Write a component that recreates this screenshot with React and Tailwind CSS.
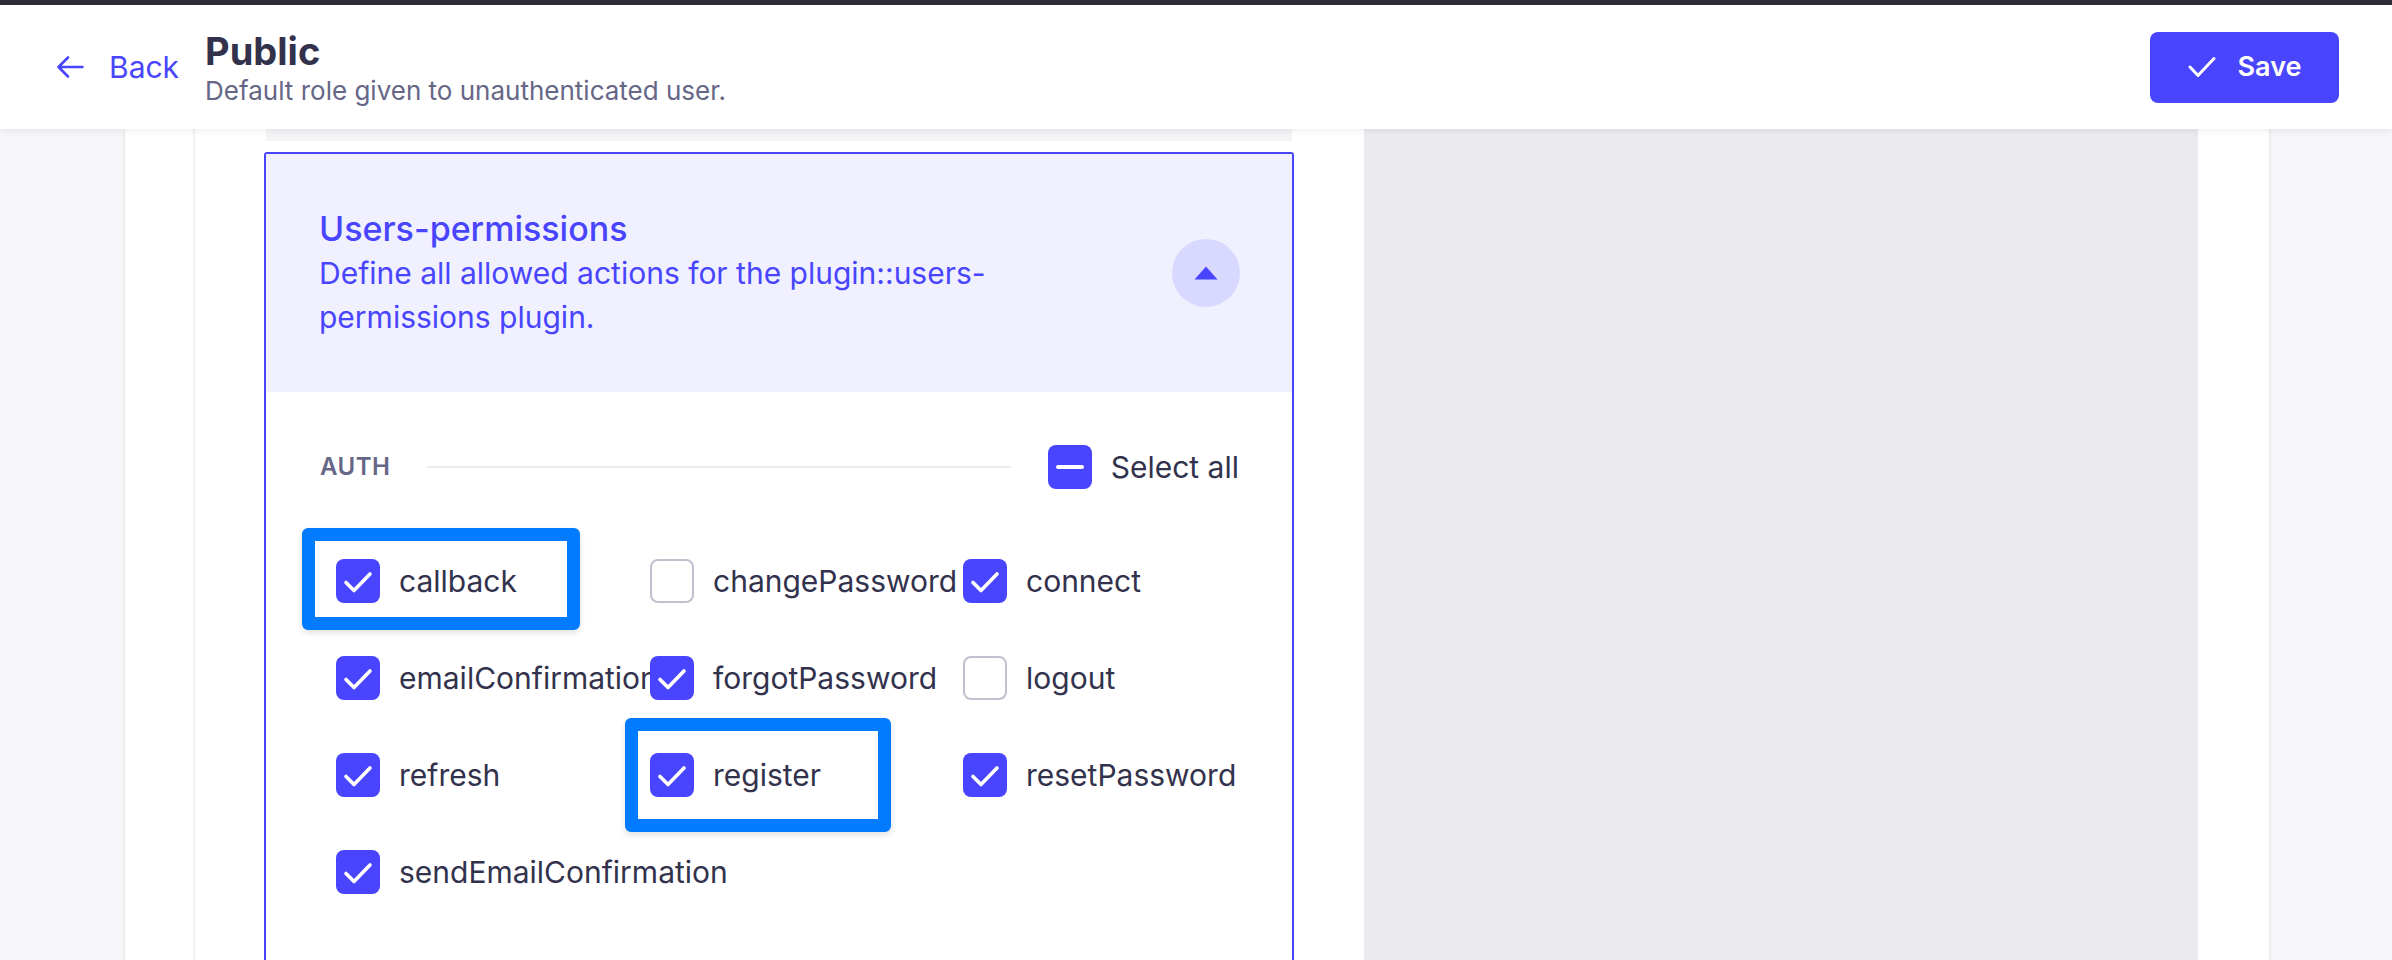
import React from "react";

const actions = [
  { name: "callback", checked: true },
  { name: "changePassword", checked: false },
  { name: "connect", checked: true },
  { name: "emailConfirmation", checked: true },
  { name: "forgotPassword", checked: true },
  { name: "logout", checked: false },
  { name: "refresh", checked: true },
  { name: "register", checked: true },
  { name: "resetPassword", checked: true },
  { name: "sendEmailConfirmation", checked: true },
];

function Box({ state }) {
  if (state === "unchecked") {
    return (
      <div className="w-[44px] h-[44px] shrink-0 rounded-[8px] bg-white border-2 border-[#c0c0cf]" />
    );
  }
  return (
    <div className="w-[44px] h-[44px] shrink-0 rounded-[8px] bg-[#4945ff] flex items-center justify-center">
      {state === "indeterminate" ? (
        <div className="w-[28px] h-[4px] rounded-full bg-white" />
      ) : (
        <svg width="44" height="44" viewBox="0 0 44 44" fill="none">
          <path
            d="M10 23.5L18 31.5L34 15"
            stroke="white"
            strokeWidth="3.6"
            strokeLinecap="round"
            strokeLinejoin="round"
          />
        </svg>
      )}
    </div>
  );
}

export default function App() {
  return (
    <div className="relative w-[2392px] h-[960px] overflow-hidden bg-[#f6f6f9] font-[Inter,sans-serif]">
      {/* window top edge */}
      <div className="h-[5px] bg-[#2e2e38]" />

      {/* Header */}
      <header className="relative z-10 h-[124px] bg-white flex items-center justify-between pl-[56px] pr-[53px] shadow-[0_2px_6px_rgba(33,33,52,0.08)]">
        <div className="flex items-center">
          <a className="flex items-center gap-[25px] text-[#4945ff] text-[30px] leading-none mr-[26px]">
            <svg width="28" height="24" viewBox="0 0 28 24" fill="none">
              <path
                d="M26.5 12H2.5M12 2.5L2.5 12L12 21.5"
                stroke="#4945ff"
                strokeWidth="2.6"
                strokeLinecap="round"
                strokeLinejoin="round"
              />
            </svg>
            Back
          </a>
          <div className="flex flex-col">
            <h1 className="text-[38px] leading-[48px] font-bold text-[#32324d]">Public</h1>
            <p className="text-[26px] leading-[32px] text-[#666687]">
              Default role given to unauthenticated user.
            </p>
          </div>
        </div>
        <button className="w-[189px] h-[71px] rounded-[8px] bg-[#4945ff] flex items-center justify-center gap-[22px] text-white text-[27px] font-semibold">
          <svg width="28" height="22" viewBox="0 0 28 22" fill="none">
            <path
              d="M2 11L10 19.5L26 2.5"
              stroke="white"
              strokeWidth="3"
              strokeLinecap="round"
              strokeLinejoin="round"
            />
          </svg>
          Save
        </button>
      </header>

      {/* Body */}
      <div className="flex h-[831px]">
        <div className="w-[125px] shrink-0 bg-[#f6f6f9] border-r-2 border-[#ececf1]" />

        <div className="flex w-[2144px] shrink-0 bg-white">
          <div className="w-[70px] shrink-0 border-r-2 border-[#f1f1f5]" />

          <div className="w-[1099px] shrink-0 pl-[69px]">
            <div className="mx-[2px] h-[12px] bg-[#f4f4f7]" />
            <div className="h-[11px]" />

            {/* Accordion */}
            <div className="border-2 border-[#4945ff] rounded-t-[3px] h-[900px]">
              <div className="h-[238px] bg-[#f0f0ff] flex items-center justify-between pl-[53px] pr-[52px]">
                <div className="flex flex-col">
                  <h2 className="text-[34px] leading-[44px] font-medium text-[#4945ff]">
                    Users-permissions
                  </h2>
                  <p className="max-w-[740px] text-[30px] leading-[44px] text-[#4945ff]">
                    Define all allowed actions for the plugin::users-permissions plugin.
                  </p>
                </div>
                <div className="w-[68px] h-[68px] rounded-full bg-[#d9d8ff] flex items-center justify-center">
                  <svg width="24" height="14" viewBox="0 0 24 14">
                    <path d="M12 0.5L23.5 13.5H0.5Z" fill="#4945ff" />
                  </svg>
                </div>
              </div>

              <div className="bg-white pt-[53px] pl-[54px] pr-[53px]">
                <div className="h-[44px] flex items-center">
                  <span className="text-[24px] font-semibold tracking-[0.5px] text-[#666687]">AUTH</span>
                  <div className="flex-1 h-[2px] bg-[#eaeaef] mx-[37px]" />
                  <div className="flex items-center gap-[19px]">
                    <Box state="indeterminate" />
                    <span className="text-[30px] text-[#32324d]">Select all</span>
                  </div>
                </div>

                <div className="mt-[70px] ml-[16px] grid grid-cols-[314px_313px_313px] gap-y-[53px]">
                  {actions.map((a) => (
                    <div key={a.name} className="flex items-center gap-[19px] h-[44px]">
                      <Box state={a.checked ? "checked" : "unchecked"} />
                      <span className="text-[30px] text-[#32324d] whitespace-nowrap">{a.name}</span>
                    </div>
                  ))}
                </div>
              </div>
            </div>
          </div>

          <div className="w-[70px] shrink-0" />
          <div className="w-[834px] shrink-0 bg-[#eaeaef]" />
          <div className="w-[71px] shrink-0" />
        </div>

        <div className="flex-1 bg-[#f6f6f9] border-l-2 border-[#ececf1]" />
      </div>

      {/* Annotation highlights */}
      <div className="absolute left-[302px] top-[528px] w-[278px] h-[102px] border-[13px] border-[#027bff] rounded-[6px] shadow-[0_3px_6px_rgba(0,0,0,0.12)]" />
      <div className="absolute left-[625px] top-[718px] w-[266px] h-[114px] border-[13px] border-[#027bff] rounded-[6px] shadow-[0_3px_6px_rgba(0,0,0,0.12)]" />
    </div>
  );
}
